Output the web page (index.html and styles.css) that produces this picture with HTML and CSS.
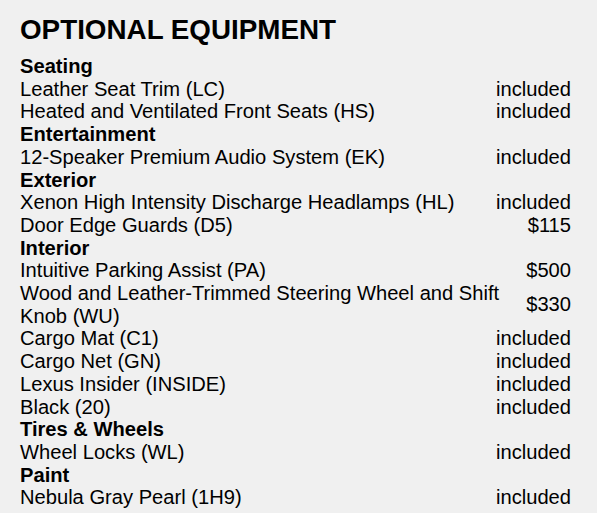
FILE: index.html
```html
<!DOCTYPE html>
<html lang="en">
<head>
<meta charset="utf-8">
<title>Optional Equipment</title>
<link rel="stylesheet" href="styles.css">
</head>
<body>
<section class="equipment">
  <h2 class="equipment-title">OPTIONAL EQUIPMENT</h2>
  <div class="group">
    <div class="category">Seating</div>
    <div class="item"><span class="name">Leather Seat Trim (LC)</span><span class="price">included</span></div>
    <div class="item"><span class="name">Heated and Ventilated Front Seats (HS)</span><span class="price">included</span></div>
  </div>
  <div class="group">
    <div class="category">Entertainment</div>
    <div class="item"><span class="name">12-Speaker Premium Audio System (EK)</span><span class="price">included</span></div>
  </div>
  <div class="group">
    <div class="category">Exterior</div>
    <div class="item"><span class="name">Xenon High Intensity Discharge Headlamps (HL)</span><span class="price">included</span></div>
    <div class="item"><span class="name">Door Edge Guards (D5)</span><span class="price">$115</span></div>
  </div>
  <div class="group">
    <div class="category">Interior</div>
    <div class="item"><span class="name">Intuitive Parking Assist (PA)</span><span class="price">$500</span></div>
    <div class="item"><span class="name">Wood and Leather-Trimmed Steering Wheel and Shift Knob (WU)</span><span class="price">$330</span></div>
    <div class="item"><span class="name">Cargo Mat (C1)</span><span class="price">included</span></div>
    <div class="item"><span class="name">Cargo Net (GN)</span><span class="price">included</span></div>
    <div class="item"><span class="name">Lexus Insider (INSIDE)</span><span class="price">included</span></div>
    <div class="item"><span class="name">Black (20)</span><span class="price">included</span></div>
  </div>
  <div class="group">
    <div class="category">Tires &amp; Wheels</div>
    <div class="item"><span class="name">Wheel Locks (WL)</span><span class="price">included</span></div>
  </div>
  <div class="group">
    <div class="category">Paint</div>
    <div class="item"><span class="name">Nebula Gray Pearl (1H9)</span><span class="price">included</span></div>
  </div>
</section>
</body>
</html>
```

FILE: styles.css
```css
html, body {
  margin: 0;
  padding: 0;
  background: #f0f0f0;
}

body {
  font-family: "Liberation Sans", Arial, sans-serif;
  color: #000;
}

.equipment {
  width: 551px;
  padding: 14px 0 0 20px;
}

.equipment-title {
  margin: 0 0 9px;
  font-size: 27.8px;
  line-height: 32px;
  font-weight: bold;
}

.group {
  display: flex;
  flex-direction: column;
}

.category {
  font-size: 20.15px;
  line-height: 22.7px;
  font-weight: bold;
}

.item {
  display: flex;
  align-items: center;
  justify-content: space-between;
  gap: 16px;
  font-size: 20.15px;
  line-height: 22.7px;
}

.name {
  flex: 1 1 auto;
}

.price {
  flex: none;
  text-align: right;
}
```
